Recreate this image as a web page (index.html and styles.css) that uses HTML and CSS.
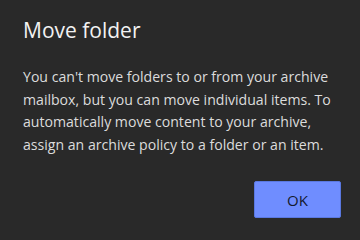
FILE: index.html
```html
<!DOCTYPE html>
<html lang="en">
<head>
    <meta charset="UTF-8">
    <title>Move folder</title>
    <link rel="stylesheet" href="styles.css">
</head>
<body>
    <div class="dialog">
        <h1 class="dialog-title">Move folder</h1>
        <p class="dialog-text">You can't move folders to or from your archive mailbox, but you can move individual items. To automatically move content to your archive, assign an archive policy to a folder or an item.</p>
        <div class="dialog-actions">
            <button type="button" class="ok-btn">OK</button>
        </div>
    </div>
</body>
</html>
```

FILE: styles.css
```css
body {
    margin: 0;
    background: #292929;
    font-family: 'Open Sans', sans-serif;
}

.dialog {
    width: 360px;
    height: 240px;
    box-sizing: border-box;
    padding: 16px 19px 0 23px;
}

.dialog-title {
    margin: 0;
    font-size: 21px;
    font-weight: 400;
    line-height: 28px;
    color: #f2f2f2;
}

.dialog-text {
    margin: 22px 0 0;
    font-size: 14.1px;
    line-height: 22.5px;
    color: #dcdcdc;
}

.dialog-actions {
    display: flex;
    justify-content: flex-end;
    margin-top: 25px;
}

.ok-btn {
    width: 87px;
    height: 37px;
    border: 1px solid #5a78e0;
    border-radius: 2px;
    background: #6f8dff;
    color: #141a2e;
    font-family: 'Open Sans', sans-serif;
    font-size: 15px;
    cursor: pointer;
}
```
